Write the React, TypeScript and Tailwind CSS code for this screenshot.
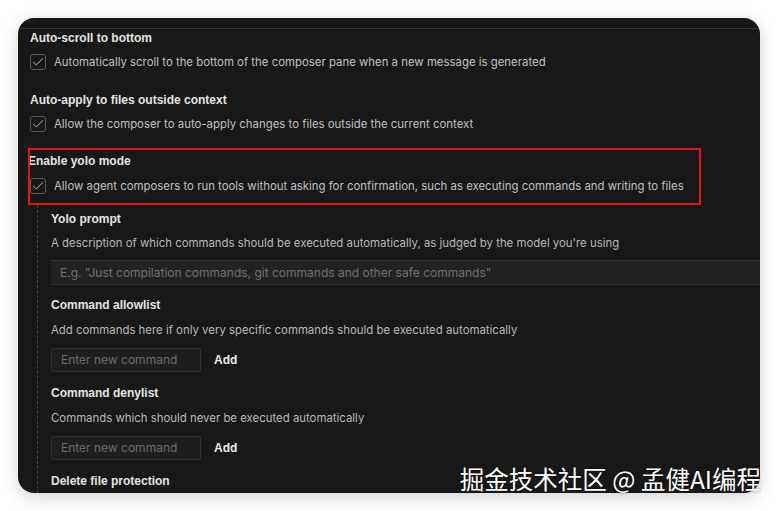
import { Check } from 'lucide-react'

const font = { fontFamily: '"Liberation Sans", Arial, sans-serif' }
const inter = { fontFamily: 'Inter, "Liberation Sans", sans-serif' }

function Heading({ children, className = '' }: { children: React.ReactNode; className?: string }) {
  return <div className={`h-4 text-[12px] leading-4 font-bold text-[#e4e4e4] whitespace-nowrap ${className}`}>{children}</div>
}

function Desc({ children, className = '' }: { children: React.ReactNode; className?: string }) {
  return (
    <div className={`h-4 text-[11.4px] leading-4 text-[#b9b9b9] whitespace-nowrap ${className}`} style={inter}>
      {children}
    </div>
  )
}

function CheckRow({ label, className = '' }: { label: string; className?: string }) {
  return (
    <div className={`flex h-4 items-center gap-2 ${className}`}>
      <div className="flex size-4 shrink-0 items-center justify-center rounded-[3px] border border-[#5a5a5a]">
        <Check className="size-3.5 text-[#c8c8c8]" strokeWidth={1.5} />
      </div>
      <span className="text-[11.4px] leading-4 text-[#c0c0c0] whitespace-nowrap" style={inter}>{label}</span>
    </div>
  )
}

function CommandInput({ className = '' }: { className?: string }) {
  return (
    <div className={`flex items-center gap-[13px] ${className}`}>
      <div
        className="flex h-6 w-[150px] items-center rounded-[2px] border border-[#333] bg-[#1e1e1e] px-[9px] text-[12px] text-[#6c6c6c]"
        style={inter}
      >
        Enter new command
      </div>
      <span className="text-[12px] font-bold text-[#ededed]">Add</span>
    </div>
  )
}

export default function App() {
  return (
    <div className="relative h-[511px] w-[778px] overflow-hidden bg-white" style={font}>
      <div className="absolute left-[18px] top-[18px] h-[475px] w-[742px] overflow-hidden rounded-[16px] bg-[#181818] shadow-[0_4px_18px_rgba(0,0,0,0.18)]">
        <div className="h-[11px] border-b border-[#363636]" />
        <div className="flex flex-col pl-3">
          <Heading className="mt-px">Auto-scroll to bottom</Heading>
          <CheckRow className="mt-2" label="Automatically scroll to the bottom of the composer pane when a new message is generated" />
          <Heading className="mt-[22px]">Auto-apply to files outside context</Heading>
          <CheckRow className="mt-2" label="Allow the composer to auto-apply changes to files outside the current context" />
          <Heading className="mt-[21px] -ml-[2px]">Enable yolo mode</Heading>
          <CheckRow className="mt-[9px]" label="Allow agent composers to run tools without asking for confirmation, such as executing commands and writing to files" />
          <div className="ml-[7px] mt-[11px] flex border-l border-dashed border-[#464646] pt-[6px] pl-[13px]">
            <div className="flex flex-1 flex-col">
              <Heading>Yolo prompt</Heading>
              <Desc className="mt-2">A description of which commands should be executed automatically, as judged by the model you're using</Desc>
              <div
                className="-mr-4 mt-[9px] flex h-[25px] items-center border-y border-[#333] bg-[#222] pl-[9px] text-[12px] text-[#707070] whitespace-nowrap"
                style={inter}
              >
                E.g. "Just compilation commands, git commands and other safe commands"
              </div>
              <Heading className="mt-3">Command allowlist</Heading>
              <Desc className="mt-[9px]">Add commands here if only very specific commands should be executed automatically</Desc>
              <CommandInput className="mt-[10px]" />
              <Heading className="mt-[13px]">Command denylist</Heading>
              <Desc className="mt-[9px]">Commands which should never be executed automatically</Desc>
              <CommandInput className="mt-[10px]" />
              <Heading className="mt-[13px]">Delete file protection</Heading>
              <div className="h-10" />
            </div>
          </div>
        </div>
      </div>
      <div className="pointer-events-none absolute left-[28px] top-[148px] h-[57px] w-[673px] border-[2.5px] border-[#e0161a]" />
      <div
        className="absolute right-[17px] top-[465px] text-[24.5px] leading-[28px] text-white [text-shadow:0_0_2px_rgba(0,0,0,0.6)]"
        style={{ fontFamily: '"Noto Sans CJK SC", "Noto Sans", sans-serif' }}
      >
        掘金技术社区 @ 孟健AI编程
      </div>
    </div>
  )
}
